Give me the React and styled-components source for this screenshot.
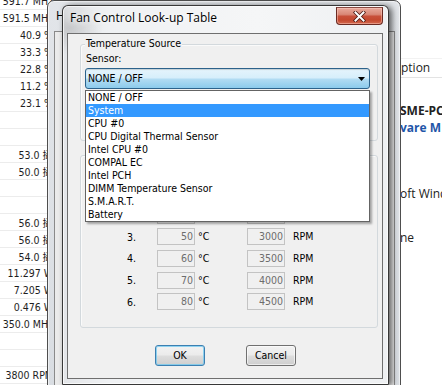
import React from "react";
import styled, { createGlobalStyle } from "styled-components";

const UI_FONT = `"DejaVu Sans Condensed", "DejaVu Sans", "Noto Sans CJK TC", sans-serif`;
const TITLE_FONT = `"Open Sans", "Noto Sans", sans-serif`;

const GlobalStyle = createGlobalStyle`
  html, body { margin: 0; padding: 0; background: #fff; }
  body { width: 442px; height: 385px; overflow: hidden; }
  *, *::before, *::after { box-sizing: border-box; }
`;

const Desktop = styled.div`
  position: relative;
  width: 442px;
  height: 385px;
  overflow: hidden;
  background: #fff;
  font-family: ${UI_FONT};
  font-stretch: condensed;
  font-size: 10.5px;
  color: #000;
`;

/* ---------- sensor list window (far left, behind) ---------- */
const SensorList = styled.div`
  position: absolute;
  left: 0;
  top: -7px;
  width: 54px;
  display: flex;
  flex-direction: column;
  background: #fff;
`;

const SensorRow = styled.div`
  height: 17px;
  border-bottom: 1px solid #ececec;
  display: flex;
  align-items: center;
  justify-content: flex-end;
  padding-right: 1px;
  white-space: nowrap;
  color: #1e1e1e;
`;

/* ---------- device window (far right, behind) ---------- */
const SidePane = styled.div`
  position: absolute;
  left: 400px;
  top: 0;
  width: 42px;
  height: 385px;
  background: #fff;
  overflow: hidden;
  font-family: ${TITLE_FONT};
  font-stretch: normal;
  font-size: 12px;
  white-space: nowrap;
  display: flex;
  flex-direction: column;
`;

const SideHeader = styled.div`
  margin-top: 58px;
  height: 20px;
  line-height: 18px;
  border-top: 1px solid #f2f2f2;
  border-bottom: 1px solid #e3e3e3;
  padding-left: 1px;
  color: #222;
`;

const SideItem = styled.div`
  margin-top: ${(p) => p.$mt}px;
  height: 16px;
  line-height: 16px;
  font-weight: ${(p) => (p.$bold ? 700 : 400)};
  color: ${(p) => (p.$blue ? "#1f56a8" : "#222")};
`;

/* ---------- window behind the dialog ---------- */
const BackWindow = styled.div`
  position: absolute;
  left: 47px;
  top: 0;
  width: 354px;
  height: 400px;
  border: 1px solid #4e4e4e;
  border-radius: 7px 7px 0 0;
  background: linear-gradient(to bottom, #e2e5e9, #d9dde2);
  box-shadow: inset 0 0 0 1px rgba(255, 255, 255, 0.55);
  padding: 0 5px 0 6px;
  display: flex;
  flex-direction: column;
`;

const BackTitle = styled.div`
  height: 30px;
  padding: 7px 0 0 2px;
  font-family: ${TITLE_FONT};
  font-stretch: normal;
  font-size: 12px;
  line-height: 16px;
  white-space: nowrap;
`;

const BackClient = styled.div`
  flex: 1;
  border: 1px solid #8a8a8a;
  background: #ebebeb;
`;

/* ---------- the dialog ---------- */
const Dialog = styled.div`
  position: absolute;
  left: 62px;
  top: 5px;
  width: 327px;
  height: 380px;
  border: 1px solid rgba(35, 35, 35, 0.9);
  border-radius: 6px 6px 1px 1px;
  background:
    radial-gradient(ellipse 34px 26px at 6px 22px, rgba(120, 120, 120, 0.28), transparent),
    linear-gradient(90deg, #e3e5e8 0%, #eff1f3 14%, #f5f6f7 60%, #eef0f2 100%);
  box-shadow: 3px 1px 6px rgba(0, 0, 0, 0.6), inset 0 0 0 1px rgba(255, 255, 255, 0.7);
  padding: 0 5px 5px 4px;
  display: flex;
  flex-direction: column;
  z-index: 2;
`;

const TitleBar = styled.div`
  height: 27px;
  display: flex;
  justify-content: space-between;
  align-items: flex-start;
`;

const TitleText = styled.div`
  padding: 4px 0 0 3px;
  font-family: ${TITLE_FONT};
  font-stretch: normal;
  font-size: 12px;
  line-height: 16px;
  color: #000;
  text-shadow: 0 0 6px #fff, 0 0 10px #fff;
  white-space: nowrap;
`;

const CloseButton = styled.div`
  margin-top: 1px;
  width: 47px;
  height: 18px;
  border: 1px solid #6a2a22;
  border-top-color: #8a4a42;
  border-radius: 0 0 4px 4px;
  background: linear-gradient(to bottom, #e9a99b 0%, #d98877 40%, #c8503a 52%, #c4492f 75%, #d36a50 100%);
  box-shadow: inset 0 0 0 1px rgba(255, 210, 200, 0.45);
  display: flex;
  align-items: center;
  justify-content: center;
`;

const Client = styled.div`
  flex: 1;
  border: 1px solid #6f6f6f;
  background: #f0f0f0;
  padding-left: 12px;
  display: flex;
  flex-direction: column;
`;

const GroupBox = styled.div`
  position: relative;
  width: 298px;
  height: ${(p) => p.$h}px;
  margin-top: ${(p) => p.$mt}px;
  border: 1px solid #d3d9dd;
  border-radius: 3px;
  box-shadow: inset 1px 1px 0 #fafafa;
  padding: ${(p) => p.$pad};
  display: flex;
  flex-direction: column;
`;

const GroupLegend = styled.div`
  position: absolute;
  top: -8px;
  left: 4px;
  padding: 0 1px;
  line-height: 13px;
  background: #f0f0f0;
  white-space: nowrap;
`;

const FieldLabel = styled.div`
  line-height: 13px;
  padding-left: 1px;
`;

const ComboWrap = styled.div`
  position: relative;
  margin-top: 3px;
  width: 285px;
  height: 21px;
`;

const ComboField = styled.div`
  width: 100%;
  height: 100%;
  border: 1px solid #2c628b;
  border-radius: 3px;
  background: linear-gradient(to bottom, #e5f4fc 0%, #d6eefb 48%, #b3dcf3 52%, #8ccbec 100%);
  box-shadow: inset 0 1px 1px rgba(0, 0, 0, 0.15);
  display: flex;
  align-items: center;
  padding: 0 4px 0 2px;
  line-height: 13px;
`;

const ComboArrow = styled.svg`
  margin-left: auto;
  width: 7px;
  height: 4px;
`;

const DropList = styled.div`
  position: absolute;
  top: 100%;
  left: 0;
  width: 285px;
  margin-top: 1px;
  border: 1px solid #646464;
  background: #fff;
  box-shadow: 2px 2px 2px rgba(0, 0, 0, 0.32);
  z-index: 5;
  display: flex;
  flex-direction: column;
`;

const DropItem = styled.div`
  height: 13px;
  line-height: 13px;
  padding-left: 2px;
  white-space: nowrap;
  background: ${(p) => (p.$selected ? "#3399ff" : "transparent")};
  color: ${(p) => (p.$selected ? "#fff" : "#000")};
`;

const Rows = styled.div`
  display: flex;
  flex-direction: column;
  gap: 4.67px;
`;

const Row = styled.div`
  height: 17px;
  display: flex;
  align-items: center;
`;

const RowNum = styled.div`
  width: 55px;
  text-align: right;
`;

const NumField = styled.div`
  margin-left: ${(p) => p.$ml}px;
  width: 38px;
  height: 17px;
  border: 1px solid #c3c3c3;
  background: #f0f0f0;
  color: #6d6d6d;
  text-align: right;
  padding-right: 1px;
  line-height: 15px;
`;

const Unit = styled.div`
  width: ${(p) => p.$w}px;
  padding-left: ${(p) => p.$pl}px;
  line-height: 13px;
`;

const ButtonRow = styled.div`
  margin-top: 17px;
  padding-left: 75px;
  display: flex;
  gap: 41px;
`;

const Button = styled.div`
  width: 50px;
  height: 21px;
  border: 1px solid ${(p) => (p.$default ? "#3c7fb1" : "#707070")};
  border-radius: 3px;
  background: linear-gradient(to bottom, #f2f2f2 0%, #ebebeb 48%, #dddddd 52%, #cfcfcf 100%);
  box-shadow: inset 0 0 0 1px ${(p) => (p.$default ? "rgba(110, 200, 240, 0.75)" : "rgba(255, 255, 255, 0.6)")};
  display: flex;
  align-items: center;
  justify-content: center;
  line-height: 13px;
`;

const sensorValues = [
  "591.7 MHz", "591.5 MHz", "40.9 %", "33.3 %", "22.8 %", "11.2 %", "23.1 %",
  "", "", "53.0 攝", "50.0 攝", "", "", "56.0 攝", "56.0 攝", "54.0 攝",
  "11.297 W", "7.205 W", "0.476 W", "350.0 MHz", "", "", "3800 RPM", "",
];

const sources = [
  "NONE / OFF", "System", "CPU #0", "CPU Digital Thermal Sensor", "Intel CPU #0",
  "COMPAL EC", "Intel PCH", "DIMM Temperature Sensor", "S.M.A.R.T.", "Battery",
];

const table = [
  { n: 1, t: 30, r: 2000 },
  { n: 2, t: 40, r: 2500 },
  { n: 3, t: 50, r: 3000 },
  { n: 4, t: 60, r: 3500 },
  { n: 5, t: 70, r: 4000 },
  { n: 6, t: 80, r: 4500 },
];

export default function App() {
  return (
    <>
      <GlobalStyle />
      <Desktop>
        <SensorList>
          {sensorValues.map((v, i) => (
            <SensorRow key={i}>{v}</SensorRow>
          ))}
        </SensorList>

        <SidePane>
          <SideHeader>ption</SideHeader>
          <SideItem $mt={25} $bold>SME-PC</SideItem>
          <SideItem $mt={1} $bold $blue>vare M</SideItem>
          <SideItem $mt={50}>oft Wind</SideItem>
          <SideItem $mt={28}>ne</SideItem>
        </SidePane>

        <BackWindow>
          <BackTitle>HWiNFO64 v4.30</BackTitle>
          <BackClient />
        </BackWindow>

        <Dialog>
          <TitleBar>
            <TitleText>Fan Control Look-up Table</TitleText>
            <CloseButton>
              <svg width="13" height="11" viewBox="0 0 13 11">
                <path d="M2.5 1.5 L10.5 9.5 M10.5 1.5 L2.5 9.5" stroke="#4a1a14" strokeWidth="3.6" strokeLinecap="square" />
                <path d="M2.5 1.5 L10.5 9.5 M10.5 1.5 L2.5 9.5" stroke="#ffffff" strokeWidth="2" strokeLinecap="square" />
              </svg>
            </CloseButton>
          </TitleBar>

          <Client>
            <GroupBox $mt={10} $h={97} $pad="7px 0 0 4px">
              <GroupLegend>Temperature Source</GroupLegend>
              <FieldLabel>Sensor:</FieldLabel>
              <ComboWrap>
                <ComboField>
                  NONE / OFF
                  <ComboArrow viewBox="0 0 7 4">
                    <path d="M0 0 H7 L3.5 4 Z" fill="#000" />
                  </ComboArrow>
                </ComboField>
                <DropList>
                  {sources.map((s) => (
                    <DropItem key={s} $selected={s === "System"}>{s}</DropItem>
                  ))}
                </DropList>
              </ComboWrap>
            </GroupBox>

            <GroupBox $mt={14} $h={173} $pad="29px 0 0 0">
              <Rows>
                {table.map((row) => (
                  <Row key={row.n}>
                    <RowNum>{row.n}.</RowNum>
                    <NumField $ml={21}>{row.t}</NumField>
                    <Unit $w={52} $pl={3}>°C</Unit>
                    <NumField $ml={0}>{row.r}</NumField>
                    <Unit $w={40} $pl={8}>RPM</Unit>
                  </Row>
                ))}
              </Rows>
            </GroupBox>

            <ButtonRow>
              <Button $default>OK</Button>
              <Button>Cancel</Button>
            </ButtonRow>
          </Client>
        </Dialog>
      </Desktop>
    </>
  );
}
